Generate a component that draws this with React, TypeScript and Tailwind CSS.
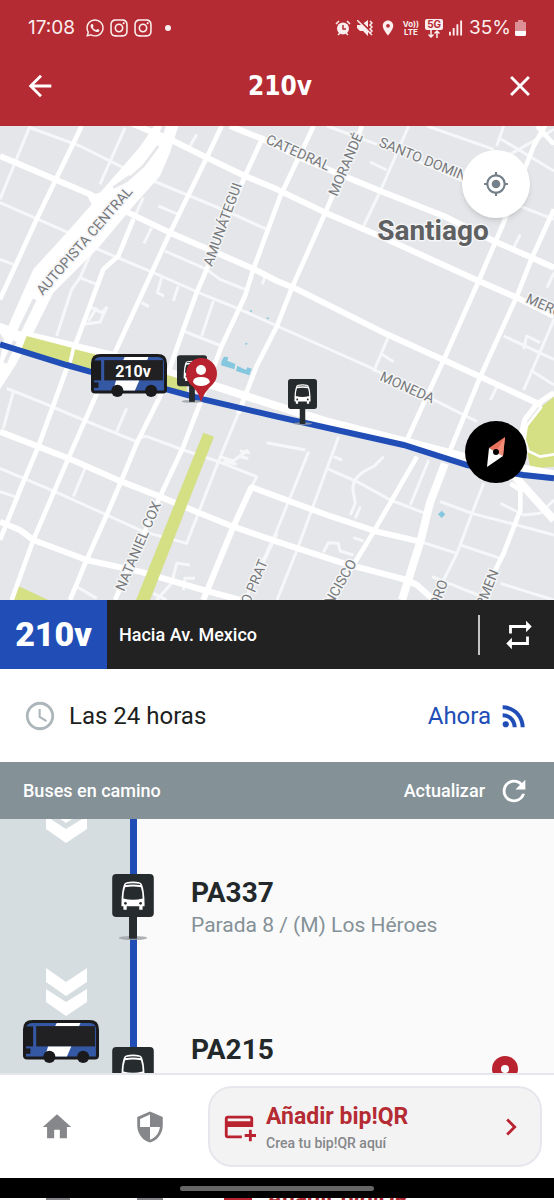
import { FaInstagram, FaWhatsapp } from "react-icons/fa";
import {
    MdAccessTime,
    MdAddCard,
    MdArrowBack,
    MdChevronRight,
    MdClose,
    MdHome,
    MdLocationOn,
    MdMyLocation,
    MdRefresh,
    MdRepeat,
    MdRssFeed,
    MdSecurity,
} from "react-icons/md";

// streets, grouped by stroke width
const wideStreets = [
    "M0 90L270 205L510 320L760 428L831 465L881 485L1161 625L1331 702L1441 752L1625 838",
    "M390 -10L520 45L620 95L735 150L831 190L976 260L1161 340L1436 465L1551 515L1662 570",
    "M690 0L790 40L900 95L1031 150L1141 195L1331 270L1481 345L1596 395L1662 425",
    "M0 917L115 962L205 997L365 1067L480 1112L600 1162L700 1202L831 1247L1031 1312L1221 1362L1251 1377L1301 1422",
    "M750 1082L831 1112L981 1167L1131 1217L1261 1247",
    "M0 1187L60 1212L100 1242L260 1302L420 1337L610 1392L720 1422",
    "M755 1082L700 1202L610 1422",
];

const mediumStreets = [
    "M245 0L110 280L0 520",
    "M665 0L620 95L510 320L455 440L340 690L205 997L160 1102L100 1242L35 1422",
    "M400 280L355 390L310 430L210 700L115 962L60 1092L0 1242",
    "M790 30L735 150L620 430L590 500L550 610L480 812L410 952L365 1062L320 1167L260 1302L210 1422",
    "M941 0L841 210L760 430L735 510L665 660L600 832L550 962L480 1112L345 1422",
    "M1086 0L976 260L876 485L831 600L770 720L715 862",
    "M1640 -10L1601 60L1511 290L1436 465L1331 702L1271 832L1221 942",
    "M1662 250L1596 395L1551 510L1441 752L1351 972",
    "M1251 992L1121 1217L1051 1332L985 1422",
    "M1531 1072L1561 1092L1561 1152L1511 1282L1441 1422",
    "M1611 0L1662 55",
];

const thinStreets = [
    "M90 0L0 220M375 5L300 175M590 25L565 70M90 5L240 60L370 125",
    "M0 230L205 320M0 400L40 415M270 360L460 440L620 510L720 550L831 600L1101 720L1180 760L1431 887",
    "M460 165L570 210L690 260L800 310M495 375L620 430L660 460L735 490M475 240L535 265",
    "M550 615L665 660M240 455L290 475M280 365L240 455L215 490L170 630M430 215L400 280M455 305L432 352",
    "M485 455L472 500L492 510M535 480L520 525M425 530L447 542M640 525L605 630M795 450L787 475",
    "M981 0L1131 55M1240 100L1571 245L1662 280M1281 0L1481 70M1496 35L1662 135M1521 90L1662 10M1511 0L1490 60",
    "M1226 0L1141 195L1091 300M1110 108L1160 132M1561 325L1541 365M1662 440L1641 485M1166 630L1121 737M1141 682L1181 707",
    "M1511 630L1662 700M1662 580L1606 711L1571 792M1571 670L1580 630L1620 650M1591 732L1662 777M1491 782L1471 822",
    "M20 787L120 827L250 882L410 947M40 797L10 907M380 847L350 917M255 1027L220 1112",
    "M0 1027L165 1097L320 1167L430 1217L560 1252L655 1007L715 862M0 1097L45 1112",
    "M410 945Q430 925 450 935L550 972L655 1007L770 1052L755 1082M230 1382L290 1417",
    "M570 1317L530 1312L515 1372L470 1422M585 1357L555 1357L550 1392M831 1222L790 1310M460 1402L500 1422",
    "M800 950L916 972M926 977L831 1212L700 1500M1016 932L981 1027L891 1272L831 1422",
    "M981 1027L1081 1072L1171 1122L1276 1162M1001 992L1026 1002M1151 992L1121 1022Q1050 1050 1060 1100L1066 1132L1051 1167M1081 1142L1066 1177",
    "M1286 1002L1231 1137M1451 1072L1416 1162L1371 1282L1331 1362M1321 1127L1416 1162L1551 1197L1662 1227",
    "M1261 1247L1371 1282M1381 1257L1501 1297M1501 1132L1571 1167L1621 1162L1662 1122M1501 1372L1662 1422M1296 1352L1471 1422",
    "M970 1280L985 1250L1015 1252L1020 1275L1060 1287M1060 1235L1090 1245",
];

const avenues = [
    "M0 605L70 625L340 690L650 782L831 840L981 887L1231 950L1411 997L1662 1045",
    "M1335 1012L1290 1130L1261 1247L1206 1422",
    "M1545 1052L1662 1182",
];

const streetLabels = [
    { name: "AUTOPISTA CENTRAL", x: 88, y: 118, angle: -49, anchor: "middle" },
    { name: "AMUNÁTEGUI", x: 227, y: 100, angle: -70, anchor: "middle" },
    { name: "CATEDRAL", x: 265, y: 17, angle: 24, anchor: "start" },
    { name: "MORANDÉ", x: 337, y: 71, angle: -67, anchor: "start" },
    { name: "SANTO DOMINGO", x: 378, y: 20, angle: 22, anchor: "start" },
    { name: "MERCED", x: 525, y: 176, angle: 24, anchor: "start" },
    { name: "MONEDA", x: 379, y: 254, angle: 24, anchor: "start" },
    { name: "NATANIEL COX", x: 124, y: 466, angle: -67, anchor: "start" },
    { name: "ARTURO PRAT", x: 268, y: 436, angle: -67, anchor: "end" },
    { name: "SAN FRANCISCO", x: 357, y: 437, angle: -60, anchor: "end" },
    { name: "SAN ISIDRO", x: 448, y: 456, angle: -70, anchor: "end" },
    { name: "CARMEN", x: 499, y: 446, angle: -68, anchor: "end" },
] as const;

const stops = [
    {
        code: "PA337",
        detail: "Parada 8 / (M) Los Héroes",
        hasBus: false,
        textClass: "pt-14",
    },
    { code: "PA215", detail: "", hasBus: true, textClass: "pt-10" },
];

type DrawingProps = {
    x?: number;
    y?: number;
    width: number;
    height: number;
    className?: string;
};

function BusIcon(props: DrawingProps) {
    return (
        <svg viewBox="0 0 225 127" {...props}>
            <path
                d="M0 28Q0 0 28 0H197Q225 0 225 28V105Q225 117 213 117H12Q0 117 0 105Z"
                fill="#1b1b1d"
            />
            <path d="M9 28Q9 9 28 9H197Q216 9 216 28V108H9Z" fill="#3558a5" />
            <path d="M100 9H170L166 18H95Z" fill="#fff" />
            <path d="M4 19H30V78H4Z" fill="#1b1b1d" />
            <rect x="39" y="18" width="174" height="60" fill="#212123" />
            <path d="M9 84H22V100H9Z" fill="#1b1b1d" />
            <path d="M74 78H143L130 108H66Z" fill="#fff" />
            <circle cx="78" cy="109" r="18" fill="#1b1b1d" />
            <circle cx="178" cy="109" r="18" fill="#1b1b1d" />
        </svg>
    );
}

function StopIcon(props: DrawingProps) {
    return (
        <svg viewBox="0 0 126 200" {...props}>
            <ellipse cx="63" cy="194" rx="43" ry="6" fill="#9a9fa3" opacity="0.8" />
            <rect x="51" y="120" width="24" height="76" fill="#262b2d" />
            <rect width="126" height="130" rx="12" fill="#262b2d" />
            <path
                d="M36 31Q39 23 63 23T90 31Q98 50 98 92V98H92V108H82V98H44V108H34V98H28V92Q28 50 36 31Z"
                fill="#fff"
            />
            <path d="M41 30Q63 26 85 30V33Q63 30 41 33Z" fill="#262b2d" />
            <path
                d="M39 40Q63 36 87 40Q92 55 92 74Q63 82 34 74Q34 55 39 40Z"
                fill="#262b2d"
            />
            <circle cx="40" cy="89" r="4" fill="#262b2d" />
            <circle cx="86" cy="89" r="4" fill="#262b2d" />
        </svg>
    );
}

function ChevronsIcon() {
    return (
        <svg viewBox="0 0 41 48" width="41" height="48" fill="#fff">
            <path d="M0 0L20 14L41 0V14L20 28L0 14Z" />
            <path d="M0 21L20 34L41 21V34L20 48L0 34Z" />
        </svg>
    );
}

function StatusBar() {
    return (
        <div className="flex items-center justify-between px-7 pt-4 text-[#fbeeee] font-[Inter,sans-serif]">
            <div className="flex items-center gap-1">
                <span className="text-[19px] leading-6 mr-1.5">17:08</span>
                <FaWhatsapp className="size-5" />
                <FaInstagram className="size-5" />
                <FaInstagram className="size-5 mr-2" />
                <span className="size-1.5 rounded-full bg-current" />
            </div>
            <div className="flex items-center gap-1.5">
                <svg viewBox="0 0 16 16" className="size-4" fill="currentColor">
                    <circle cx="8" cy="8.500" r="6" />
                    <path
                        d="M1 4L4 1M15 4L12 1M3 15L5 13M13 15L11 13"
                        stroke="currentColor"
                        strokeWidth="1.500"
                    />
                    <path d="M8 5V9H11" stroke="#b52b33" strokeWidth="1.500" fill="none" />
                </svg>
                <svg viewBox="0 0 16 16" className="size-4" fill="currentColor">
                    <path d="M0 5H4L11 0V16L6 11H3L0 8Z" />
                    <path d="M2 0L15 13" stroke="#b52b33" strokeWidth="2" />
                    <path
                        d="M0 0L14 14M13 1L15 3L13 5L15 7L13 9L15 11L13 13L15 15"
                        stroke="currentColor"
                        strokeWidth="1.500"
                        fill="none"
                    />
                </svg>
                <MdLocationOn className="size-4.5" />
                <span className="flex flex-col items-center text-[8px] leading-2 font-bold">
                    <span>Vo))</span>
                    <span>LTE</span>
                </span>
                <span className="flex flex-col items-center">
                    <span className="rounded-xs bg-[#fbeeee] px-0.5 text-[10px] leading-[11px] font-bold text-[#b52b33]">
                        5G
                    </span>
                    <svg viewBox="0 0 12 8" className="w-3 h-2" fill="none" stroke="currentColor">
                        <path
                            d="M3 0V7M0.500 4.500L3 7L5.500 4.500M9 8V1M6.500 3.500L9 1L11.500 3.500"
                            strokeWidth="1.500"
                        />
                    </svg>
                </span>
                <svg viewBox="0 0 15 16" className="w-3.5 h-4" fill="currentColor">
                    <path d="M0 12H2V16H0ZM4 8H6V16H4ZM8 4H10V16H8ZM12 0H14V16H12Z" />
                </svg>
                <span className="flex items-center gap-1">
                    <span className="text-[19px] leading-6">35%</span>
                    <svg viewBox="0 0 11 16" className="w-[11px] h-4">
                        <path d="M3 0H8V2H11V16H0V2H3Z" fill="#dc8f95" />
                        <path d="M0 11H11V14Q11 16 9 16H2Q0 16 0 14Z" fill="#fff" />
                    </svg>
                </span>
            </div>
        </div>
    );
}

function StreetMap() {
    return (
        <svg
            viewBox="0 0 554 474"
            preserveAspectRatio="xMidYMid slice"
            className="block w-full h-full"
        >
            <svg viewBox="0 0 1662 1422" width="554" height="474">
                <rect width="1662" height="1422" fill="#e4e6e9" />

                {/* parks and water */}
                <g fill="#d5df83">
                    <path d="M55 1380L145 1422H38Z" />
                    <path d="M1662 812L1631 837L1591 882L1571 932L1581 972L1591 1028L1662 1022Z" />
                </g>
                <g fill="#85c7df">
                    <path d="M665 705L672 692L685 694L682 704L706 714L703 730L663 718Z" />
                    <path d="M712 719L738 732L742 724L755 728L748 748L708 735Z" />
                    <circle cx="753" cy="555" r="3" />
                    <circle cx="803" cy="577" r="3" />
                    <circle cx="739" cy="653" r="3" />
                    <path d="M1314 1165L1325 1154L1336 1165L1325 1176Z" />
                </g>

                {/* streets */}
                <g fill="none" stroke="#fff" strokeLinejoin="round">
                    <g strokeWidth="9" opacity="0.7">
                        {thinStreets.map((d) => (
                            <path key={d} d={d} />
                        ))}
                    </g>
                    <g strokeWidth="14">
                        {mediumStreets.map((d) => (
                            <path key={d} d={d} />
                        ))}
                    </g>
                    <g strokeWidth="18">
                        {wideStreets.map((d) => (
                            <path key={d} d={d} />
                        ))}
                    </g>
                    <g strokeWidth="24">
                        {avenues.map((d) => (
                            <path key={d} d={d} />
                        ))}
                    </g>
                    <path d="M1662 800L1610 835L1575 880L1560 940L1560 1000" strokeWidth="16" />
                    <path d="M1625 842L1580 900L1574 940L1585 975L1620 992L1662 985" strokeWidth="8" />
                    <g strokeWidth="9" opacity="0.7">
                        <path d="M275 545L305 560L320 545L300 588L250 595M290 545L265 585" />
                        <path d="M660 992L700 1005L745 972M670 1005L710 1015M720 975L750 980M715 990L745 998" />
                    </g>
                </g>

                {/* motorway */}
                <path
                    d="M462 0L420 62L370 120L300 200L262 210L275 235L200 320L100 430L60 520L25 600L0 590V622L12 640L0 700V790L45 720L95 630L130 560L160 500L220 440L300 360L400 240L480 150L510 80L535 0Z"
                    fill="#fff"
                />
                <g fill="none" stroke="#e4e6e9">
                    <path d="M475 60L430 120L380 165L340 185L390 150" strokeWidth="8" />
                    <path d="M492 0L485 20" strokeWidth="12" />
                    <path d="M104 520L70 590L58 615M45 645L15 711" strokeWidth="12" />
                </g>

                {/* green medians */}
                <g fill="#d5df83">
                    <path d="M80 630L215 665L205 710L65 668Z" />
                    <path d="M225 670L400 715L560 765V800L215 718Z" />
                    <path d="M610 920L642 932L450 1422H408Z" />
                </g>

                {/* route */}
                <path
                    d="M0 655L200 717L270 737L500 790L610 820L831 872L1211 957L1401 1017L1570 1047L1662 1057"
                    fill="none"
                    stroke="#204eb6"
                    strokeWidth="18"
                />
            </svg>

            <g
                className="font-[Roboto,sans-serif] text-[14px]"
                fill="#77797c"
                stroke="#f4f5f6"
                strokeWidth="3"
                strokeLinejoin="round"
                paintOrder="stroke"
            >
                {streetLabels.map(({ name, x, y, angle, anchor }) => (
                    <text
                        key={name}
                        textAnchor={anchor}
                        transform={`translate(${x} ${y}) rotate(${angle})`}
                    >
                        {name}
                    </text>
                ))}
                <text
                    x="433"
                    y="114"
                    textAnchor="middle"
                    fill="#5f6062"
                    className="text-[28px] font-bold"
                >
                    Santiago
                </text>
            </g>

            <StopIcon x={177} y={229} width={30} height={48} />
            <StopIcon x={288} y={253} width={29} height={46} />
            <BusIcon x={91} y={228} width={76} height={43} />
            <text
                x="133"
                y="251"
                textAnchor="middle"
                fill="#fff"
                className="font-[Roboto,sans-serif] text-[16px] font-bold"
            >
                210v
            </text>

            {/* user pin */}
            <path
                d="M201 276Q198 264 190 258A15.500 15.500 0 1 1 213 258Q204 266 201 276Z"
                fill="#b9222f"
            />
            <circle cx="201" cy="244" r="5" fill="#fff" />
            <path d="M193 256Q193 251 201 251T210 256Q207 260 201 260T193 256Z" fill="#fff" />
        </svg>
    );
}

function CompassButton() {
    return (
        <button
            aria-label="Orientar al norte"
            className="absolute right-[27px] top-[295px] size-[62px] rounded-full bg-black"
        >
            <svg viewBox="0 0 62 62" className="size-full">
                <path d="M40 16L24 27L38 35Z" fill="#e9725c" />
                <path d="M40 16L38 35L31 31Z" fill="#f08c78" />
                <path d="M22 46L24 27L38 35Z" fill="#fff" />
                <circle cx="31" cy="31" r="3" fill="#000" />
            </svg>
        </button>
    );
}

export default function App() {
    return (
        <div className="flex flex-col h-screen overflow-hidden bg-white font-[Roboto,sans-serif]">
            <header className="h-[126px] shrink-0 bg-[#b52b33] text-white">
                <StatusBar />
                <div className="flex items-center justify-between px-[23px] pt-7">
                    <button aria-label="Volver">
                        <MdArrowBack className="size-[34px]" />
                    </button>
                    <h1 className="text-[26px] leading-9 font-bold font-['DejaVu_Sans_Condensed','DejaVu_Sans',sans-serif]">
                        210v
                    </h1>
                    <button aria-label="Cerrar" className="-mr-1.5">
                        <MdClose className="size-[34px]" />
                    </button>
                </div>
            </header>

            <section className="relative h-[474px] shrink-0 overflow-hidden">
                <StreetMap />
                <button
                    aria-label="Mi ubicación"
                    className="absolute right-6 top-6 flex size-[68px] items-center justify-center rounded-full bg-white text-[#74818a] shadow-md"
                >
                    <MdMyLocation className="size-[26px]" />
                </button>
                <CompassButton />
            </section>

            {/* Line and direction */}
            <section className="flex h-[69px] shrink-0 items-center bg-[#222222] text-white">
                <div className="flex h-full w-[107px] items-center justify-center bg-[#204eb6] text-[34px] font-black">
                    210v
                </div>
                <p className="flex-1 pl-3 text-[18px] font-medium">Hacia Av. Mexico</p>
                <div className="flex h-10 items-center border-l-2 border-[#c4c4c4] pl-[22px] pr-[18px]">
                    <button aria-label="Cambiar sentido">
                        <MdRepeat className="size-[34px]" />
                    </button>
                </div>
            </section>

            {/* Schedule */}
            <section className="flex h-[93px] shrink-0 items-center justify-between px-[23px] text-[24px]">
                <div className="flex items-center gap-3 text-[#1d1f21]">
                    <MdAccessTime className="size-[34px] text-[#adb7bb]" />
                    <span>Las 24 horas</span>
                </div>
                <button className="flex items-center gap-1.5 text-[#204eb6]">
                    Ahora
                    <MdRssFeed className="size-[34px]" />
                </button>
            </section>

            <section className="flex h-[57px] shrink-0 items-center justify-between bg-[#849197] px-[23px] text-[18px] font-medium text-white">
                <h2>Buses en camino</h2>
                <button className="flex items-center gap-3">
                    Actualizar
                    <MdRefresh className="size-[34px]" />
                </button>
            </section>

            {/* Stops */}
            <ul className="flex-1 min-h-0 overflow-hidden bg-[#fafafa]">
                {stops.map((stop) => (
                    <li
                        key={stop.code}
                        className="relative grid h-[173px] grid-cols-[133px_1fr]"
                    >
                        <div className="flex flex-col items-center gap-1 bg-[#d5dde0]">
                            <div className="-mt-6">
                                <ChevronsIcon />
                            </div>
                            {stop.hasBus && (
                                <BusIcon width={76} height={43} className="-ml-3" />
                            )}
                        </div>
                        <div className="absolute inset-y-0 left-[130px] w-[7px] bg-[#204eb6]" />
                        <StopIcon
                            width={42}
                            height={66}
                            className="absolute left-[112px] top-[55px]"
                        />
                        <div className={`flex justify-between pl-[58px] pr-9 ${stop.textClass}`}>
                            <div>
                                <h3 className="text-[28px] leading-9 font-bold text-[#23282b]">
                                    {stop.code}
                                </h3>
                                <p className="text-[21px] leading-7 text-[#849197]">
                                    {stop.detail}
                                </p>
                            </div>
                            {stop.hasBus && (
                                <svg viewBox="0 0 26 36" className="mt-6 w-[26px] h-9">
                                    <path
                                        d="M13 0A13 13 0 0 1 26 13C26 22 13 36 13 36S0 22 0 13A13 13 0 0 1 13 0Z"
                                        fill="#b9222f"
                                    />
                                    <circle cx="13" cy="13" r="4" fill="#fff" />
                                </svg>
                            )}
                        </div>
                    </li>
                ))}
            </ul>

            <nav className="flex h-[105px] shrink-0 items-center border-t-2 border-[#e6e7ec] bg-white pr-3 text-[#85878a]">
                <div className="flex w-[208px] items-center justify-between pl-10 pr-[41px]">
                    <a href="#inicio" aria-label="Inicio">
                        <MdHome className="size-[34px]" />
                    </a>
                    <a href="#seguridad" aria-label="Seguridad">
                        <MdSecurity className="size-[34px]" />
                    </a>
                </div>
                <button className="flex h-[81px] flex-1 items-center gap-2 rounded-3xl border-2 border-[#e6e7ec] bg-[#f3f3f4] px-3 text-left">
                    <MdAddCard className="size-[34px] text-[#b9222f]" />
                    <span className="flex flex-1 flex-col pt-1 pl-0.5">
                        <span className="text-[23px] leading-7 font-bold text-[#b52b33]">
                            Añadir bip!QR
                        </span>
                        <span className="text-[14px] leading-6 font-medium">
                            Crea tu bip!QR aquí
                        </span>
                    </span>
                    <MdChevronRight className="size-[34px] text-[#b9222f]" />
                </button>
            </nav>

            {/* System gesture bar */}
            <div className="flex h-5 shrink-0 items-center justify-center bg-black">
                <div className="h-[5px] w-[194px] rounded-full bg-[#666666]" />
            </div>
            <div className="flex h-0.5 shrink-0 overflow-hidden bg-white pl-[46px]">
                <span className="w-6 bg-[#85878a]" />
                <span className="ml-[67px] w-[26px] bg-[#85878a]" />
                <span className="ml-[61px] w-7 bg-[#b9222f]" />
                <span className="ml-[15px] text-[23px] leading-[2px] font-bold text-[#b52b33]">
                    Añadir bip!QR
                </span>
            </div>
        </div>
    );
}
